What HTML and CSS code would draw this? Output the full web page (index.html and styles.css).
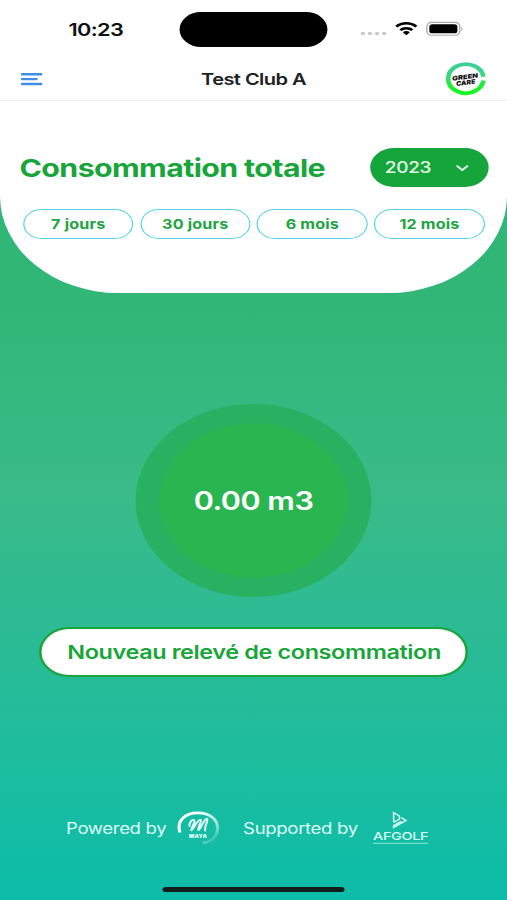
FILE: index.html
```html
<!DOCTYPE html>
<html lang="fr">
<head>
<meta charset="utf-8">
<title>Test Club A</title>
<link rel="stylesheet" href="styles.css">
</head>
<body>
<div class="screen">
  <div class="status">
    <div class="time">10:23</div>
    <div class="island"></div>
    <svg class="indicators" width="86" height="20" viewBox="0 0 86 20">
      <g fill="#c9c9c9"><circle cx="2" cy="13.5" r="1.8"/><circle cx="7.8" cy="13.5" r="1.8"/><circle cx="13.6" cy="13.5" r="1.8"/><circle cx="19.4" cy="13.5" r="1.8"/></g>
      <g fill="none" stroke="#000" stroke-width="2.4"><path d="M29.4 6.6a11.6 11.6 0 0 1 16.4 0"/><path d="M32.7 10.2a7 7 0 0 1 9.8 0"/></g>
      <path d="M34.7 12.3a4.2 4.2 0 0 1 5.8 0L37.6 15.2z"/>
      <rect x="54.4" y="2.4" width="27" height="12.8" rx="4" fill="none" stroke="#aaa" stroke-width="1.1"/>
      <rect x="56.4" y="4.3" width="23" height="9" rx="2.6"/>
      <path d="M82.7 6.8q1.6 1.9 0 4z" fill="#999"/>
    </svg>
  </div>
  <header class="bar">
    <svg width="18" height="14" viewBox="0 0 18 14" stroke="#3f8fe2" stroke-width="2.4" stroke-linecap="round"><path d="M1.2 2.2h15.4M1.2 7.1h11.6M1.2 12h15.4"/></svg>
    <h1>Test Club A</h1>
    <svg width="33" height="34" viewBox="0 0 33 34">
      <defs><linearGradient id="ring" x1="0" y1="0" x2="0" y2="1"><stop offset="0" stop-color="#3bcf9b"/><stop offset=".5" stop-color="#38da70"/><stop offset=".75" stop-color="#19f22d"/><stop offset="1" stop-color="#16f51f"/></linearGradient></defs>
      <path d="M30.7 14.8A14.5 14.5 0 1 0 30.7 18.6" fill="none" stroke="url(#ring)" stroke-width="3.8"/>
      <g class="brand" transform="rotate(-9 16 17)"><text x="5.2" y="17.1" textLength="21.5" lengthAdjust="spacingAndGlyphs">GREEN</text><text x="7.6" y="22.8" textLength="16" lengthAdjust="spacingAndGlyphs">CARE</text></g>
    </svg>
  </header>
  <section class="panel">
    <div class="heading">
      <h2>Consommation totale</h2>
      <button class="year"><span>2023</span><svg width="11" height="8" viewBox="0 0 11 8" fill="none" stroke="#e4ffe8" stroke-width="1.8" stroke-linecap="round" stroke-linejoin="round"><path d="M1.3 2.1l4.1 4 4.1-4"/></svg></button>
    </div>
    <div class="periods">
      <button>7 jours</button><button>30 jours</button><button>6 mois</button><button>12 mois</button>
    </div>
  </section>
  <main>
    <div class="gauge"><div class="value">0.00 m3</div></div>
    <button class="add">Nouveau relevé de consommation</button>
  </main>
  <footer>
    <span class="powered">Powered by</span>
    <svg class="maya" width="35" height="36" viewBox="0 0 35 36" fill="none" stroke="#e6fffa">
      <defs><linearGradient id="fade" x1="0" y1="0" x2="1" y2="1"><stop offset=".25" stop-color="#fff"/><stop offset=".55" stop-color="#b7efe3"/><stop offset=".95" stop-color="#fff" stop-opacity="0"/></linearGradient></defs>
      <path d="M2.3 22.5C-1 10.5 7 2.9 16.5 2.9C27 2.9 33.3 9.5 33.1 18.5C32.9 27.5 27.5 32.2 21 33" stroke="url(#fade)" stroke-width="2.6"/>
      <path d="M10.2 16C9.2 13.2 12.6 8.6 14 10.1C15.1 12 12 16.5 11.6 20.3C14.2 17.6 16.8 9.2 19.2 9.8C20.8 10.6 16.8 16.8 17.4 20.2C20 18.4 21.6 8.9 24.6 8.7C25.8 9.6 22 17.2 23 20.6" stroke-width="1.7" stroke-linecap="round" stroke-linejoin="round"/>
      <text x="9.8" y="28" textLength="14.6" fill="#e6fffa" stroke="none">MAYA</text>
    </svg>
    <span class="supported">Supported by</span>
    <svg class="afgolf" width="46" height="36" viewBox="0 0 46 36" fill="none" stroke="#d9fff6">
      <path d="M17.2 11.8V2.5L21.9 6V9.2M17.2 12.4L22.3 9M23.4 7.6L27.4 10.4 17.2 17.6V15.6L23.6 11.2" stroke-width="1.3"/>
      <text x=".4" y="30" textLength="45" lengthAdjust="spacingAndGlyphs" fill="#d9fff6" stroke="none">AFGOLF</text>
      <path d="M.5 33.4h45" stroke-width="1.3" stroke-opacity=".5"/>
    </svg>
  </footer>
  <div class="home"></div>
</div>
</body>
</html>
```
FILE: styles.css
```css
* { box-sizing: border-box; }
body { margin: 0; overflow: hidden; font-family: Inter, "Liberation Sans", sans-serif; }
h1, h2 { margin: 0; white-space: nowrap; }
button { font: inherit; padding: 0; white-space: nowrap; }
svg { display: block; flex: none; }
.screen {
  width: 415px; height: 900px;
  transform: scaleX(1.22169); transform-origin: 0 0;
  display: flex; flex-direction: column;
  background: linear-gradient(#30b574 0, #30b676 300px, #3abb89 490px, #2cbb94 630px, #19bda0 790px, #0cbca9 900px);
}
.status { height: 58px; flex: none; background: #fff; display: flex; align-items: flex-start; }
.time { width: 147.2px; padding: 18.5px 0 0 56px; font-size: 17.8px; line-height: 22px; font-weight: 600; letter-spacing: -.5px; color: #111; }
.island { width: 121px; height: 35px; margin-top: 12px; border-radius: 18px; background: #000; }
.indicators { margin: 20px 0 0 26.5px; }
.bar { height: 43px; flex: none; background: #fff; border-bottom: 1px solid #f0f0f0; display: flex; align-items: center; justify-content: space-between; padding: 0 17px 0 17px; }
.bar h1 { font-size: 16.4px; font-weight: 600; letter-spacing: -.45px; color: #202124; margin-left: 15px; }
.brand { font: italic 900 6.2px Inter, sans-serif; fill: #111; }
.panel { height: 192px; flex: none; background: #fff; border-radius: 0 0 97px 97px; padding-top: 47px; }
.heading { display: flex; justify-content: space-between; align-items: center; padding: 0 15.5px 0 16px; }
.heading h2 { font-size: 24.8px; font-weight: 700; letter-spacing: -.48px; color: #18a53a; }
.year { width: 96.5px; height: 39px; border: 0; border-radius: 20px; background: #16a53a; color: #e4ffe8; font-size: 15.6px; font-weight: 500; letter-spacing: -.3px; display: flex; align-items: center; justify-content: space-between; padding: 0 16px 0 12px; }
.periods { display: grid; grid-template-columns: repeat(4, 1fr); gap: 5.3px; padding: 0 18.2px 0 18.8px; margin-top: 22px; }
.periods button { height: 30px; border: 1.3px solid #56d4e7; border-radius: 15px; background: #fff; color: #20a442; font-size: 13.2px; line-height: 26px; font-weight: 700; letter-spacing: .15px; padding-bottom: 1px; }
main { flex: 1; display: flex; flex-direction: column; align-items: center; padding-top: 111px; }
.gauge { width: 193px; height: 193px; border-radius: 50%; background: #27b160; display: flex; align-items: center; justify-content: center; }
.value { width: 155px; height: 155px; border-radius: 50%; background: #29b650; color: #fff; font-size: 25px; font-weight: 600; letter-spacing: -.4px; display: flex; align-items: center; justify-content: center; }
.add { width: 351px; height: 50px; margin-top: 30px; border: 2px solid #18a53a; border-radius: 25px; background: #fff; color: #18a53a; font-size: 19.2px; font-weight: 600; letter-spacing: -.32px; padding-left: 1px; }
footer { display: flex; align-items: center; height: 40px; padding-left: 54px; color: #dffff8; font-size: 15.2px; letter-spacing: -.28px; white-space: nowrap; }
.powered { width: 91px; }
.supported { width: 106px; margin-left: 19px; }
.maya text { font: 900 4.5px Inter, sans-serif; letter-spacing: 0; }
.afgolf text { font: 500 11px Inter, sans-serif; }
.home { width: 149px; height: 5px; border-radius: 3px; background: #101c19; margin: 39px auto 8px; flex: none; }
```
